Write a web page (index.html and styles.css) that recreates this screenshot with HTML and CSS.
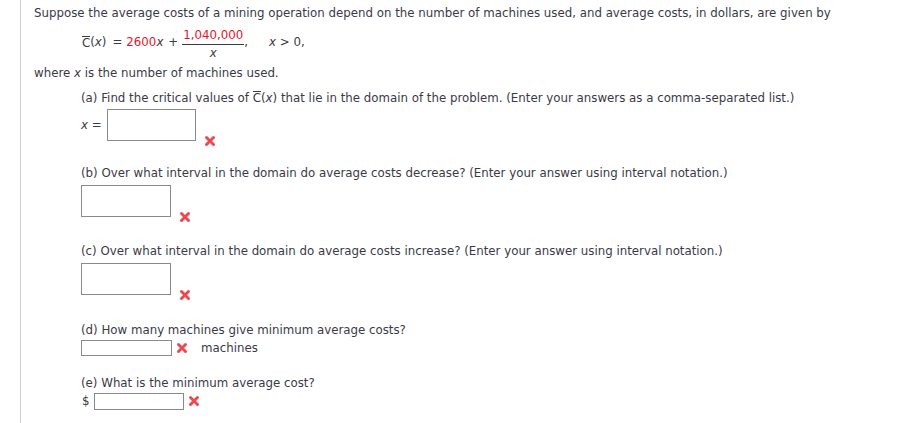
FILE: index.html
```html
<!DOCTYPE html>
<html>
<head>
<meta charset="utf-8">
<link rel="stylesheet" href="styles.css">
</head>
<body>
<div class="page">
  <p class="line intro">Suppose the average costs of a mining operation depend on the number of machines used, and average costs, in dollars, are given by</p>
  <div class="formula">
    <span class="cbar">C</span><span>(<i>x</i>)</span><span class="eq">=</span><span class="red">2600</span><i>x</i><span class="plus">+</span><span class="frac"><span class="num red">1,040,000</span><span class="den"><i>x</i></span></span><span class="comma">,</span><span class="cond"><i>x</i> &gt; 0,</span>
  </div>
  <p class="line">where <i>x</i> is the number of machines used.</p>

  <div class="part part-a">
    <p class="line">(a) Find the critical values of <span class="cbar">C</span>(<i>x</i>) that lie in the domain of the problem. (Enter your answers as a comma-separated list.)</p>
    <div class="row row-big">
      <span class="lbl"><i>x</i> =</span>
      <span class="box box-a"></span>
      <span class="xmark low"><svg viewBox="0 0 12 12" width="12" height="12"><path d="M2.5 2.5 L9.5 9.5 M9.5 2.5 L2.5 9.5" stroke="#ec4a52" stroke-width="3" stroke-linecap="round"/></svg></span>
    </div>
  </div>

  <div class="part part-b">
    <p class="line">(b) Over what interval in the domain do average costs decrease? (Enter your answer using interval notation.)</p>
    <div class="row row-big">
      <span class="box box-bc"></span>
      <span class="xmark low"><svg viewBox="0 0 12 12" width="12" height="12"><path d="M2.5 2.5 L9.5 9.5 M9.5 2.5 L2.5 9.5" stroke="#ec4a52" stroke-width="3" stroke-linecap="round"/></svg></span>
    </div>
  </div>

  <div class="part part-c">
    <p class="line">(c) Over what interval in the domain do average costs increase? (Enter your answer using interval notation.)</p>
    <div class="row row-big">
      <span class="box box-bc"></span>
      <span class="xmark low"><svg viewBox="0 0 12 12" width="12" height="12"><path d="M2.5 2.5 L9.5 9.5 M9.5 2.5 L2.5 9.5" stroke="#ec4a52" stroke-width="3" stroke-linecap="round"/></svg></span>
    </div>
  </div>

  <div class="part part-d">
    <p class="line">(d) How many machines give minimum average costs?</p>
    <div class="row row-small">
      <span class="box box-d"></span>
      <span class="xmark near"><svg viewBox="0 0 12 12" width="12" height="12"><path d="M2.5 2.5 L9.5 9.5 M9.5 2.5 L2.5 9.5" stroke="#ec4a52" stroke-width="3" stroke-linecap="round"/></svg></span>
      <span class="unit">machines</span>
    </div>
  </div>

  <div class="part part-e">
    <p class="line">(e) What is the minimum average cost?</p>
    <div class="row row-small">
      <span class="dollar">$</span>
      <span class="box box-e"></span>
      <span class="xmark near"><svg viewBox="0 0 12 12" width="12" height="12"><path d="M2.5 2.5 L9.5 9.5 M9.5 2.5 L2.5 9.5" stroke="#ec4a52" stroke-width="3" stroke-linecap="round"/></svg></span>
    </div>
  </div>
</div>
</body>
</html>
```

FILE: styles.css
```css
html, body {
  margin: 0;
  padding: 0;
  background: #fff;
}
body {
  font-family: "DejaVu Sans", Verdana, sans-serif;
  font-size: 11.8px;
  color: #3a3a46;
}
.page {
  margin-left: 20px;
  border-left: 1px solid #d0d0d0;
  padding-left: 13px;
  padding-top: 5px;
  height: 423px;
  box-sizing: border-box;
}
.line {
  margin: 0;
  line-height: 16px;
  white-space: nowrap;
}
i { font-style: italic; }
.red { color: #e8112d; }
.cbar {
  display: inline-block;
  border-top: 1px solid #3a3a46;
  line-height: 11px;
  padding-top: 1px;
}
.formula {
  display: flex;
  align-items: center;
  margin-left: 48px;
  height: 44px;
  white-space: pre;
}
.formula > span, .formula > i { position: relative; top: -1px; }
.formula > .frac { top: 1px; }
.eq { margin: 0 4px 0 6px; }
.plus { margin: 0 4px 0 5px; }
.frac {
  display: inline-flex;
  flex-direction: column;
  align-items: center;
}
.num {
  border-bottom: 1px solid #3a3a46;
  padding: 0 1px 2px;
  line-height: 13px;
}
.den { line-height: 14px; padding-top: 1px; }
.comma { margin-right: 21px; }
.part { margin-left: 47px; }
.part-a { margin-top: 9px; }
.part-b { margin-top: 24px; }
.part-c { margin-top: 26px; }
.part-d { margin-top: 27px; }
.part-e { margin-top: 19px; }
.row {
  display: flex;
  align-items: flex-start;
}
.row-big { margin-top: 3px; height: 32px; }
.part-b .row-big, .part-c .row-big { margin-top: 4px; }
.row-small { margin-top: 2px; height: 16px; }
.lbl { line-height: 32px; margin-right: 5px; }
.box {
  display: inline-block;
  border: 1px solid #8a8a8a;
  box-sizing: border-box;
  background: #fff;
}
.box-a { width: 89px; height: 32px; }
.box-bc { width: 90px; height: 32px; }
.box-d { width: 91px; height: 16px; }
.box-e { width: 90px; height: 17px; }
.xmark { display: inline-flex; flex: none; }
.xmark.low { margin-left: 8px; margin-top: 26px; }
.xmark.near { margin-left: 4px; margin-top: 2px; }
.unit { margin-left: 13px; line-height: 16px; }
.dollar { line-height: 17px; margin-right: 4px; margin-left: 1px; }
```
